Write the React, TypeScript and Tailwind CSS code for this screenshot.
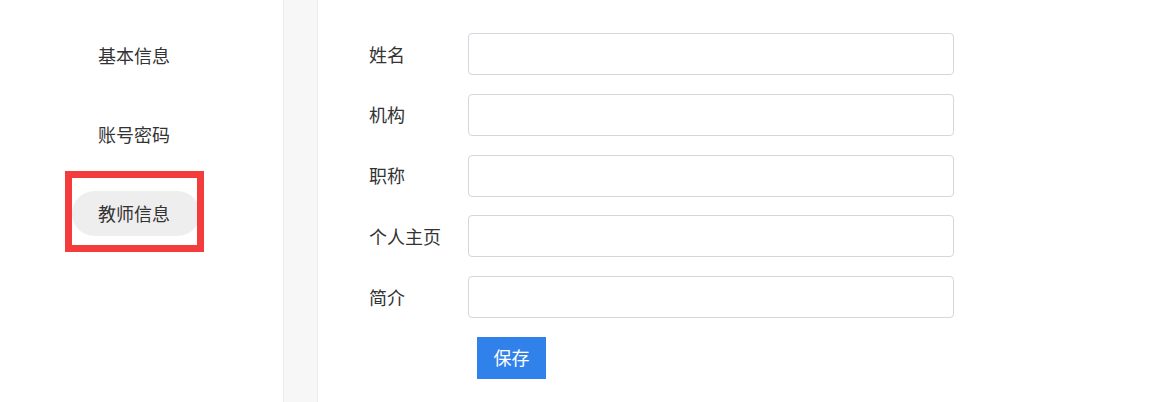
import React from "react"

const menu = ["基本信息", "账号密码", "教师信息"]
const fields = ["姓名", "机构", "职称", "个人主页", "简介"]

export default function App() {
  return (
    <div className="flex h-[402px] w-[1150px] bg-white font-['Noto_Sans_CJK_SC','Noto_Sans',sans-serif] text-[#333]">
      {/* side menu */}
      <aside className="relative flex w-[283px] flex-col gap-[34px] pl-[72px] pt-[33px]">
        {menu.map((m, i) => (
          <div
            key={m}
            className={
              "flex h-[45px] w-[128px] items-center rounded-full pl-[26px] text-[18px] " +
              (i === 2 ? "bg-[#eeeeee]" : "")
            }
          >
            {m}
          </div>
        ))}
        {/* highlight annotation */}
        <div className="pointer-events-none absolute left-[65px] top-[171px] h-[81px] w-[139px] border-[7px] border-[#f53c3c]" />
      </aside>

      {/* divider strip */}
      <div className="w-[35px] border-x border-[#ededed] bg-[#f7f7f7]" />

      {/* form */}
      <main className="flex flex-col gap-[18.8px] pl-[51px] pt-[33px]">
        {fields.map((f) => (
          <div key={f} className="flex items-center">
            <label className="w-[99px] text-[18px]">{f}</label>
            <input className="h-[42px] w-[486px] rounded-[4px] border border-[#d3d6dc] bg-white px-3 outline-none" />
          </div>
        ))}
        <div className="pl-[108px]">
          <button className="h-[42px] w-[69px] bg-[#3181eb] text-[18px] text-white">保存</button>
        </div>
      </main>
    </div>
  )
}
